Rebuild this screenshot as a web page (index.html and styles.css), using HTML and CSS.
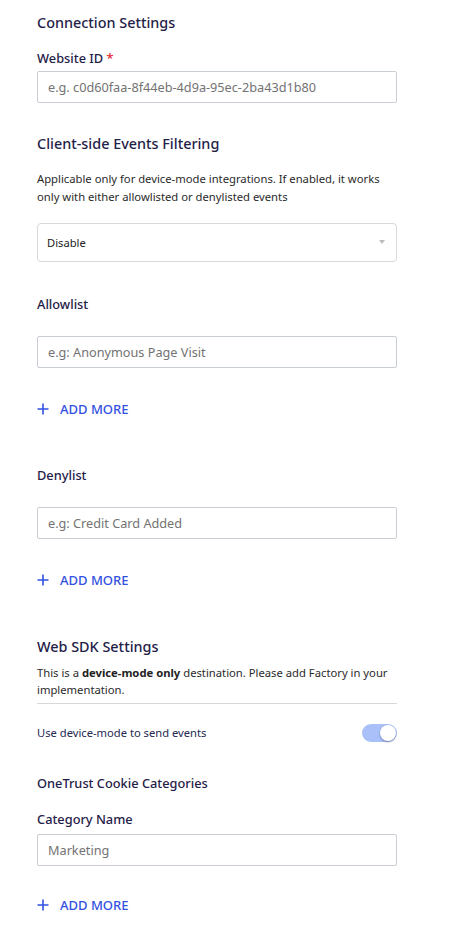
FILE: index.html
```html
<!DOCTYPE html>
<html lang="en">
<head>
<meta charset="utf-8">
<link rel="stylesheet" href="styles.css">
</head>
<body>
<main class="page">
  <section class="block conn">
    <h2 class="heading">Connection Settings</h2>
    <label class="label label-id">Website ID <span class="req">*</span></label>
    <div class="input"><span class="ph">e.g. c0d60faa-8f44eb-4d9a-95ec-2ba43d1b80</span></div>
  </section>

  <section class="block filter">
    <h2 class="heading">Client-side Events Filtering</h2>
    <p class="desc">Applicable only for device-mode integrations. If enabled, it works only with either allowlisted or denylisted events</p>
    <div class="select"><span class="sel-text">Disable</span><span class="caret"></span></div>
  </section>

  <section class="block list allow">
    <div class="label">Allowlist</div>
    <div class="input"><span class="ph">e.g: Anonymous Page Visit</span></div>
    <div class="add"><svg class="plus" width="12" height="12" viewBox="0 0 12 12"><path d="M6 0.5V11.5M0.5 6H11.5" stroke="#3251e0" stroke-width="1.6" fill="none"/></svg><span>ADD MORE</span></div>
  </section>

  <section class="block list deny">
    <div class="label">Denylist</div>
    <div class="input"><span class="ph">e.g: Credit Card Added</span></div>
    <div class="add"><svg class="plus" width="12" height="12" viewBox="0 0 12 12"><path d="M6 0.5V11.5M0.5 6H11.5" stroke="#3251e0" stroke-width="1.6" fill="none"/></svg><span>ADD MORE</span></div>
  </section>

  <section class="block sdk">
    <h2 class="heading">Web SDK Settings</h2>
    <p class="desc sdk-desc">This is a <b>device-mode only</b> destination. Please add Factory in your implementation.</p>
    <div class="toggle-row">
      <span class="toggle-label">Use device-mode to send events</span>
      <span class="toggle"><span class="knob"></span></span>
    </div>
  </section>

  <section class="block onetrust">
    <h3 class="subheading">OneTrust Cookie Categories</h3>
    <div class="label cat-label">Category Name</div>
    <div class="input"><span class="val">Marketing</span></div>
    <div class="add"><svg class="plus" width="12" height="12" viewBox="0 0 12 12"><path d="M6 0.5V11.5M0.5 6H11.5" stroke="#3251e0" stroke-width="1.6" fill="none"/></svg><span>ADD MORE</span></div>
  </section>
</main>
</body>
</html>
```
FILE: styles.css
```css
* { box-sizing: border-box; }
html, body { margin: 0; padding: 0; background: #fff; }
body {
  font-family: "Noto Sans", "Open Sans", sans-serif;
  color: #1f2148;
}
.page {
  width: 360px;
  margin-left: 37px;
  padding-top: 12px;
  display: flex;
  flex-direction: column;
}
.block { display: flex; flex-direction: column; }
.heading {
  margin: 0;
  font-size: 14.4px;
  line-height: 22px;
  font-weight: 500;
  color: #1f2148;
}
.subheading {
  margin: 0;
  font-size: 12.8px;
  line-height: 20px;
  font-weight: 500;
  color: #1f2148;
}
.label {
  font-size: 12.8px;
  line-height: 20px;
  font-weight: 500;
  color: #1f2148;
}
.label-id { margin-top: 14px; margin-bottom: 3px; }
.req { color: #e5262d; }
.input {
  height: 32px;
  border: 1px solid #c9cdd4;
  border-radius: 2px;
  display: flex;
  align-items: center;
  padding: 0 10px;
  font-size: 12.7px;
}
.ph, .val { color: #737373; }
.filter { margin-top: 30px; }
.desc {
  margin: 0;
  font-size: 11.25px;
  line-height: 18px;
  color: #2a2a2a;
}
.filter .desc { margin-top: 15px; }
.select {
  margin-top: 17px;
  height: 39px;
  border: 1px solid #d9d9d9;
  border-radius: 4px;
  display: flex;
  align-items: center;
  justify-content: space-between;
  padding: 0 11px 0 9px;
  font-size: 11.2px;
  color: #222;
}
.caret {
  width: 0; height: 0;
  border-left: 3.5px solid transparent;
  border-right: 3.5px solid transparent;
  border-top: 4px solid #bdbdbd;
  margin-top: -2px;
}
.allow { margin-top: 32px; }
.deny { margin-top: 47px; }
.list .label { margin-bottom: 22px; }
.add {
  display: flex;
  align-items: center;
  gap: 11px;
  color: #3251e0;
  font-size: 13px;
  font-weight: 500;
  line-height: 18px;
  margin-top: 32px;
}
.plus { flex: none; }
.sdk { margin-top: 47px; }
.sdk-desc {
  margin-top: 6px;
  line-height: 17px;
  padding-bottom: 5px;
  border-bottom: 1px solid #d8d8d8;
}
.sdk-desc b { font-weight: 700; color: #222; }
.toggle-row {
  display: flex;
  align-items: center;
  justify-content: space-between;
  margin-top: 20px;
}
.toggle-label { font-size: 11.2px; line-height: 18px; color: #252850; }
.toggle {
  width: 35px; height: 18px;
  border-radius: 9px;
  background: #a9c0f8;
  position: relative;
}
.knob {
  position: absolute;
  right: 1px; top: 1px;
  width: 16px; height: 16px;
  border-radius: 50%;
  background: #fff;
  box-shadow: 0 1px 2px rgba(0,0,40,0.35);
}
.onetrust { margin-top: 31px; }
.cat-label { margin-top: 16px; margin-bottom: 5px; }
.onetrust .add { margin-top: 30px; }
```
